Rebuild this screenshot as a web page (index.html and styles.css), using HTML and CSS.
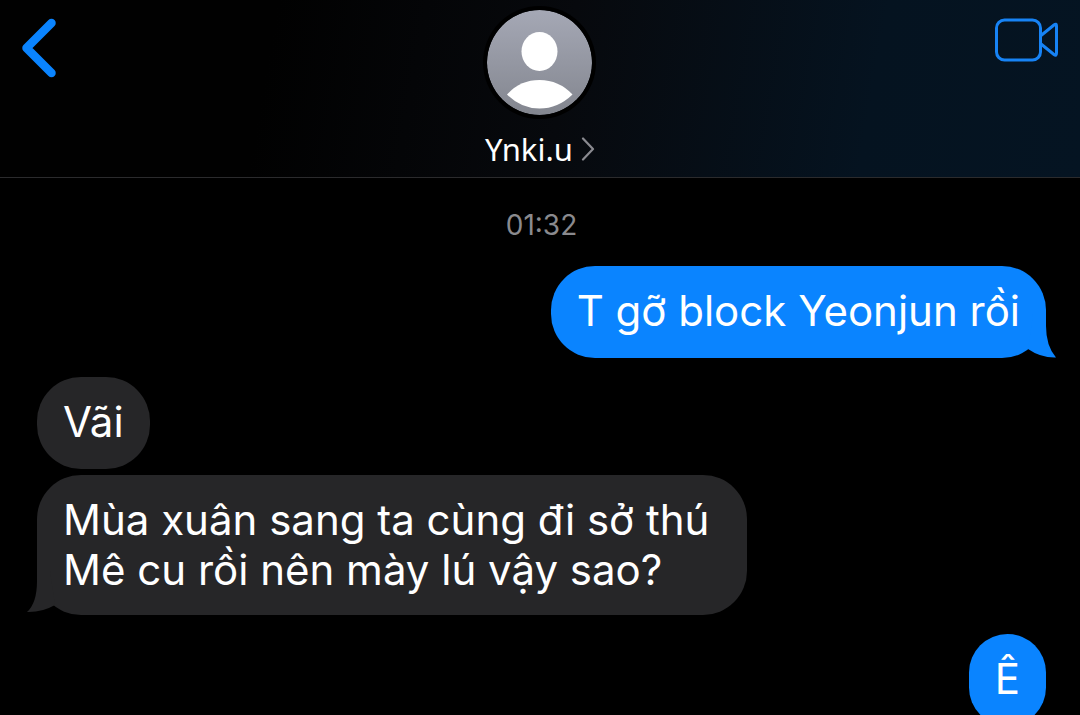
FILE: index.html
```html
<!DOCTYPE html>
<html lang="vi">
<head>
  <meta charset="UTF-8" />
  <meta name="viewport" content="width=device-width, initial-scale=1.0" />
  <title>Ynki.u</title>
  <link rel="stylesheet" href="styles.css">
</head>
<body>
  <div class="chat">
    <header class="chat-header">
      <button type="button" class="icon-button back" aria-label="Quay lại">
        <svg width="36" height="60" viewBox="0 0 36 60">
          <path d="M30.500 5 L5.500 30 L30.500 55" fill="none" stroke="currentColor" stroke-width="8.500" stroke-linecap="round" stroke-linejoin="round" />
        </svg>
      </button>

      <button type="button" class="contact">
        <svg class="avatar" viewBox="0 0 105 105" aria-hidden="true">
          <defs>
            <linearGradient id="avatarFill" x1="0" y1="0" x2="0" y2="1">
              <stop offset="0" stop-color="#a5a8b5" />
              <stop offset="1" stop-color="#83868f" />
            </linearGradient>
          </defs>
          <circle cx="52.5" cy="52.5" r="52.5" fill="url(#avatarFill)" />
          <ellipse cx="52.5" cy="41.5" rx="18" ry="19.5" fill="#fff" />
          <path d="M20 84.500 Q33 70 52.500 70 Q72 70 85.500 84.500 Q71 98.500 52.500 98.500 Q34 98.500 20 84.500 Z" fill="#fff" />
        </svg>
        <span class="contact-name">
          Ynki.u
          <svg width="14" height="24" viewBox="0 0 14 24" aria-hidden="true">
            <path d="M2 1.500 L12 12 L2 22.500" fill="none" stroke="#8a8a90" stroke-width="2.200" stroke-linecap="round" stroke-linejoin="round" />
          </svg>
        </span>
      </button>

      <button type="button" class="icon-button video" aria-label="Gọi video">
        <svg width="64" height="44" viewBox="0 0 64 44">
          <g fill="none" stroke="#1783f5" stroke-width="3" stroke-linejoin="round">
            <rect x="1.500" y="2" width="44" height="40" rx="8" />
            <path d="M46 17.500 L59 7 Q61.500 5 61.500 8 L61.500 35 Q61.500 38.500 59 36.500 L46 26" />
          </g>
        </svg>
      </button>
    </header>

    <main class="messages">
      <time class="timestamp">01:32</time>

      <div class="group sent">
        <p class="bubble">
          T gỡ block Yeonjun rồi
          <svg class="tail" width="32" height="44" viewBox="0 0 32 44" aria-hidden="true">
            <path d="M21 0 L21 12 Q21 32 31 43.500 Q16 44 3 35 L8 0 Z" />
          </svg>
        </p>
      </div>

      <div class="group received">
        <p class="bubble">Vãi</p>
        <p class="bubble">
          Mùa xuân sang ta cùng đi sở thú&nbsp;<br>
          Mê cu rồi nên mày lú vậy sao?
          <svg class="tail" width="32" height="44" viewBox="0 0 32 44" aria-hidden="true">
            <path d="M21 0 L21 10 Q21 32 31 41 Q16 41.500 3 34 L8 0 Z" />
          </svg>
        </p>
      </div>

      <div class="group sent">
        <p class="bubble">Ê</p>
      </div>
    </main>
  </div>
</body>
</html>
```

FILE: styles.css
```css
* {
  box-sizing: border-box;
}

body {
  margin: 0;
  background-color: #000;
  color: #fff;
  font-family: 'Inter', sans-serif;
}

.chat {
  height: 100vh;
  display: flex;
  flex-direction: column;
  overflow: hidden;
}

.chat-header {
  display: grid;
  grid-template-columns: 1fr auto 1fr;
  align-items: start;
  flex-shrink: 0;
  padding: 10px 21px 8px;
  background: linear-gradient(100deg, #010101 25%, #07090d 52%, #051320 80%, #051422);
  border-bottom: 1px solid #2b2b2d;
}

button {
  padding: 0;
  border: none;
  background: none;
  color: inherit;
  font-family: inherit;
  cursor: pointer;
}

.icon-button {
  display: flex;
  margin-top: 8px;
}

.back {
  color: #0a84ff;
}

.video {
  justify-self: end;
}

.contact {
  display: flex;
  flex-direction: column;
  align-items: center;
  gap: 14px;
}

.avatar {
  width: 105px;
  height: 105px;
  border-radius: 50%;
  box-shadow: 0 0 0 4px #000;
}

.contact-name {
  display: flex;
  align-items: center;
  gap: 8px;
  font-family: 'Noto Sans', sans-serif;
  font-size: 31px;
  line-height: 40px;
}

.messages {
  flex: 1;
  padding: 30px 34px 0 37px;
}

.timestamp {
  display: block;
  margin-bottom: 24px;
  text-align: center;
  font-size: 28px;
  line-height: 34px;
  color: #8a8a8e;
}

.group {
  display: flex;
  flex-direction: column;
  gap: 6px;
  margin-bottom: 19px;
}

.sent {
  align-items: flex-end;
}

.received {
  align-items: flex-start;
}

.bubble {
  position: relative;
  min-height: 92px;
  margin: 0;
  padding: 20px 26px;
  border-radius: 44px;
  font-size: 42px;
  line-height: 50px;
}

.sent .bubble {
  background-color: #0a84ff;
}

.received .bubble {
  background-color: #262628;
}

.tail {
  position: absolute;
  bottom: 0;
}

.sent .tail {
  right: -11px;
  fill: #0a84ff;
}

.received .tail {
  left: -11px;
  fill: #262628;
  transform: scaleX(-1);
}
```
